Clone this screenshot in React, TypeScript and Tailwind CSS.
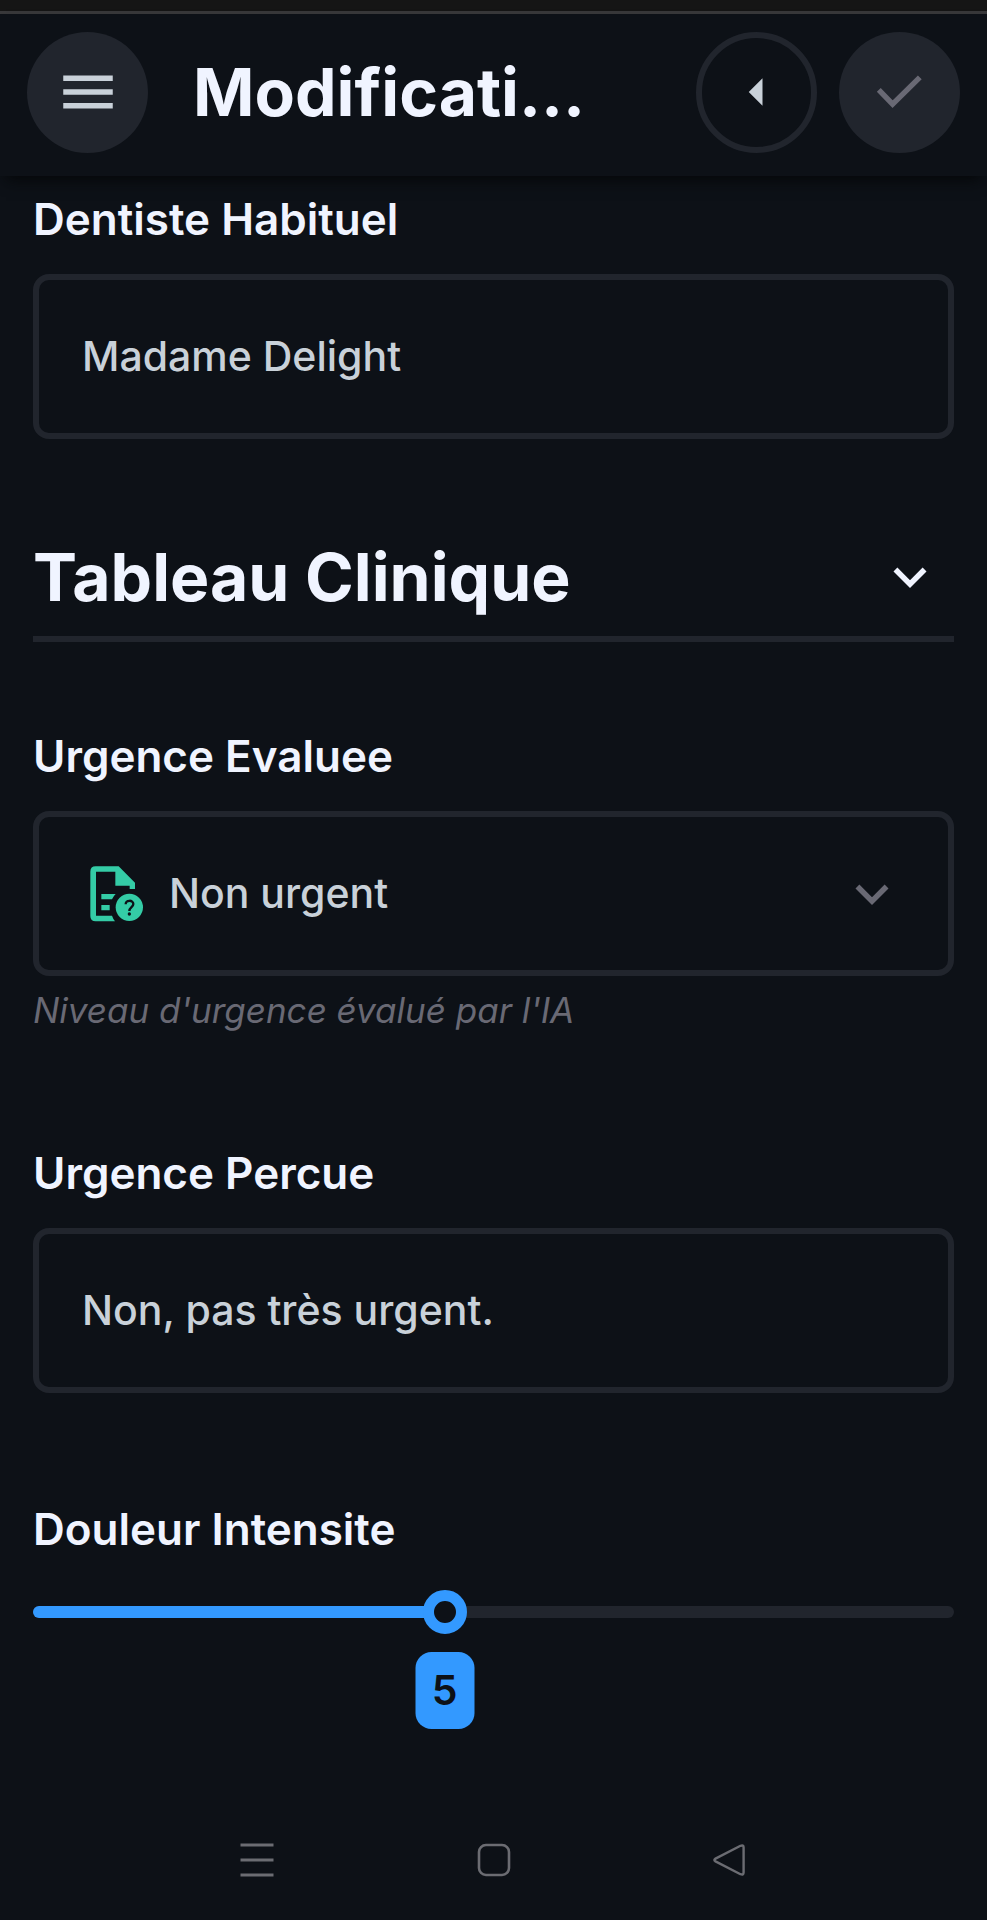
import { useState } from 'react';
import type { ReactNode } from 'react';

function MenuIcon() {
  return (
    <svg viewBox="0 0 24 24" className="size-[66px]" fill="currentColor" aria-hidden="true">
      <path d="M3 18h18v-2H3v2zm0-5h18v-2H3v2zm0-7v2h18V6H3z" />
    </svg>
  );
}

function ArrowLeftIcon() {
  return (
    <svg viewBox="0 0 24 24" className="size-[66px]" fill="currentColor" aria-hidden="true">
      <path d="M14 7l-5 5 5 5V7z" />
    </svg>
  );
}

function CheckIcon() {
  return (
    <svg viewBox="0 0 66 66" className="size-[66px]" fill="none" stroke="currentColor" strokeWidth="5.4" aria-hidden="true">
      <path d="M11.8 30.8L25.6 45.2L52.8 18.4" />
    </svg>
  );
}

function ChevronIcon() {
  return (
    <svg viewBox="0 0 24 24" className="size-[66px]" fill="currentColor" aria-hidden="true">
      <path d="M16.59 8.59L12 13.17 7.41 8.59 6 10l6 6 6-6z" />
    </svg>
  );
}

function DocumentQuestionIcon() {
  return (
    <svg viewBox="68 64 198 198" className="size-[66px]" aria-hidden="true">
      <path
        fill="#34cca6"
        d="M106 80H175L224 129V148H208V138H165V96H107V228H155Q158 237 164 245H106Q90 245 90 229V96Q90 80 106 80ZM123 163H166Q159 170 155 179H123ZM123 196H148V212H123Z"
      />
      <circle cx="207" cy="203" r="41" fill="#34cca6" />
      <path d="M196 194C196 180 219 180 219 193C219 202 207 203 207 214" fill="none" stroke="#0d1117" strokeWidth="7" />
      <circle cx="207" cy="223" r="5" fill="#0d1117" />
    </svg>
  );
}

function Field({ id, label, className, children }: { id: string; label: string; className?: string; children: ReactNode }) {
  return (
    <div className={className}>
      <label htmlFor={id} className="block text-[44px] leading-[56px] font-semibold text-[#f0f4ff]">
        {label}
      </label>
      {children}
    </div>
  );
}

const boxClass =
  'mt-[27px] block h-[165px] w-full appearance-none rounded-2xl border-6 border-[#21252d] bg-transparent text-[41px] font-medium text-[#c9d1d9] outline-none';

export default function App() {
  const [dentist, setDentist] = useState('Madame Delight');
  const [perceived, setPerceived] = useState('Non, pas très urgent.');
  const [pain, setPain] = useState(5);
  const ratio = (pain - 1) / 9;
  const thumbCenter = `calc(22px + (100% - 44px) * ${ratio})`;

  return (
    <div className="flex min-h-screen flex-col bg-[#0d1117] font-['Inter',sans-serif]">
      <div className="h-[14px] border-b-3 border-[#38383a] bg-[#151515]" />
      <header className="flex items-center px-[27px] pt-[18px] pb-[23px] shadow-[0_10px_14px_-6px_#050709]">
        <button type="button" aria-label="Menu" className="flex size-[121px] shrink-0 items-center justify-center rounded-full bg-[#21252d] pb-[2px] text-[#c9d1d9]">
          <MenuIcon />
        </button>
        <h1 className="ml-[45px] min-w-0 flex-1 truncate pb-[2px] text-[66px] leading-[80px] font-bold text-[#f0f4ff]">Modificati...</h1>
        <div className="flex shrink-0 gap-[22px]">
          <button type="button" aria-label="Retour" className="flex size-[121px] items-center justify-center rounded-full border-6 border-[#21252d] pb-[2px] text-[#c9d1d9]">
            <ArrowLeftIcon />
          </button>
          <button type="button" aria-label="Valider" className="flex size-[121px] items-center justify-center rounded-full bg-[#21252d] pb-[2px] text-[#696974]">
            <CheckIcon />
          </button>
        </div>
      </header>

      <main className="flex-1 px-[33px] pt-[15px]">
        <Field id="dentist" label="Dentiste Habituel">
          <input id="dentist" type="text" value={dentist} onChange={(e) => setDentist(e.target.value)} className={`${boxClass} px-[43px] pb-[2px]`} />
        </Field>

        <h2 className="mt-[98px] border-b-6 border-[#21252d] pb-[19px] text-[66px] leading-[80px] font-bold text-[#f0f4ff]">
          <button type="button" aria-expanded="true" className="flex h-[80px] w-full items-center justify-between pr-[11px]">
            <span>Tableau Clinique</span>
            <ChevronIcon />
          </button>
        </h2>

        <Field id="assessed" label="Urgence Evaluee" className="mt-[86px]">
          <div className="relative">
            <select id="assessed" defaultValue="non" className={`${boxClass} pl-[130px]`}>
              <option value="non">Non urgent</option>
            </select>
            <div className="pointer-events-none absolute inset-0 flex items-center justify-between pr-[49px] pl-[50px] text-[#696974]">
              <DocumentQuestionIcon />
              <ChevronIcon />
            </div>
          </div>
          <p className="mt-3 text-[35px] leading-[44px] text-[#696974] italic">Niveau d'urgence évalué par l'IA</p>
        </Field>

        <Field id="perceived" label="Urgence Percue" className="mt-[113px]">
          <input id="perceived" type="text" value={perceived} onChange={(e) => setPerceived(e.target.value)} className={`${boxClass} px-[43px] pb-[2px]`} />
        </Field>

        <Field id="pain" label="Douleur Intensite" className="mt-[108px]">
          <div className="relative mt-[33px] h-[139px]">
            <div className="absolute inset-x-0 top-4 h-3 overflow-hidden rounded-full bg-[#21252d]">
              <div className="h-full bg-[#3399ff]" style={{ width: thumbCenter }} />
            </div>
            <input
              id="pain"
              type="range"
              min={1}
              max={10}
              value={pain}
              onChange={(e) => setPain(Number(e.target.value))}
              className="relative block h-11 w-full appearance-none bg-transparent outline-none [&::-webkit-slider-thumb]:size-11 [&::-webkit-slider-thumb]:appearance-none [&::-webkit-slider-thumb]:rounded-full [&::-webkit-slider-thumb]:border-11 [&::-webkit-slider-thumb]:border-[#3399ff] [&::-webkit-slider-thumb]:bg-[#0d1117]"
            />
            <output
              htmlFor="pain"
              className="absolute top-[62px] flex h-[77px] w-[59px] -translate-x-1/2 items-center justify-center rounded-2xl bg-[#3399ff] text-[41px] font-semibold text-[#0d1117]"
              style={{ left: thumbCenter }}
            >
              {pain}
            </output>
          </div>
        </Field>
      </main>

      <nav className="mx-auto grid h-[121px] w-[72%] grid-cols-3 place-items-center text-[#6b6c72]">
        <button type="button" aria-label="Applications récentes">
          <svg viewBox="0 0 34 34" className="size-[34px]" fill="none" stroke="currentColor" strokeWidth="3" aria-hidden="true">
            <path d="M0.5 2H33.5M0.5 17H33.5M0.5 32H33.5" />
          </svg>
        </button>
        <button type="button" aria-label="Accueil">
          <svg viewBox="0 0 34 34" className="size-[34px]" fill="none" stroke="currentColor" strokeWidth="2.6" aria-hidden="true">
            <rect x="2" y="2" width="30" height="30" rx="7" />
          </svg>
        </button>
        <button type="button" aria-label="Précédent">
          <svg viewBox="1 0 34 34" className="size-[34px]" fill="none" stroke="currentColor" strokeWidth="2.4" strokeLinejoin="round" aria-hidden="true">
            <path d="M28.5 2.8L3.5 15.6Q1.2 17 3.5 18.4L28.5 31.2Q31.6 32.4 31.6 29.5V4.5Q31.6 1.6 28.5 2.8Z" />
          </svg>
        </button>
      </nav>
    </div>
  );
}
